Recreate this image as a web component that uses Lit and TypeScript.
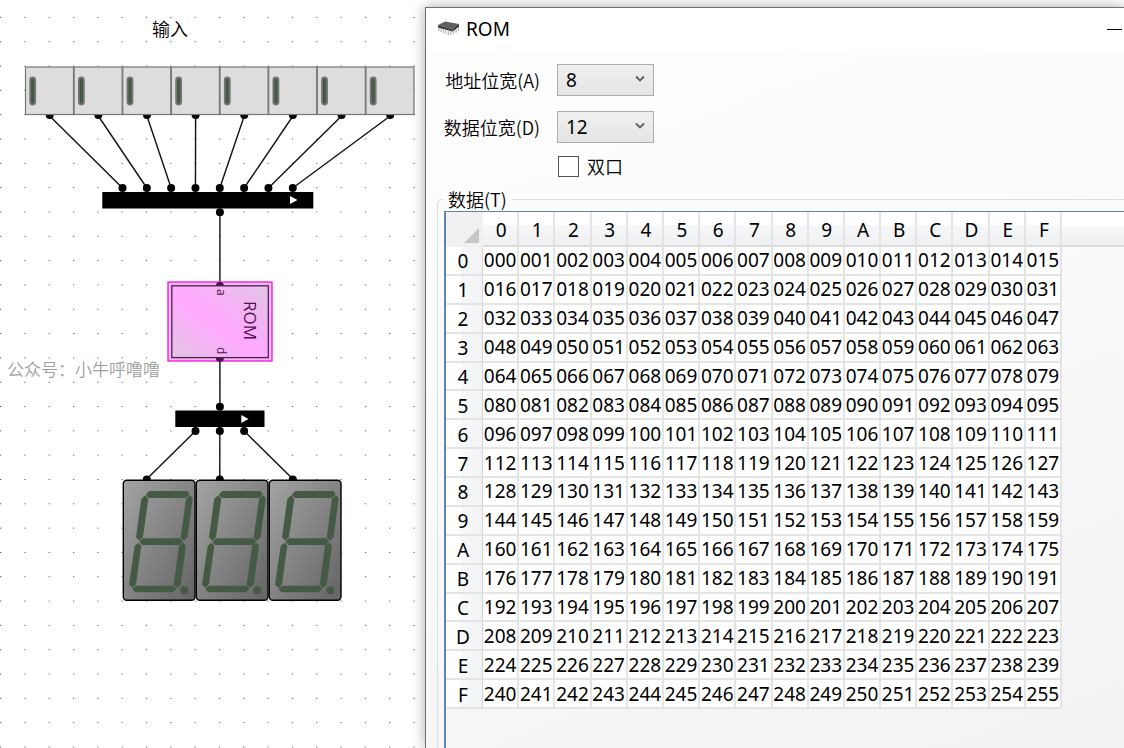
import { LitElement, html, svg, css } from "lit";
import { customElement, property } from "lit/decorators.js";

const HEX = "0123456789ABCDEF".split("");
const PITCH = 48.64;
const HALF = 24.32;

@customElement("circuit-canvas")
class CircuitCanvas extends LitElement {
  static styles = css`
    :host { display: block; height: 100%; overflow: hidden; background: #fff; }
    .sheet { display: block; }
    .caption { font: 350 18px "Noto Sans CJK SC", sans-serif; fill: #000; }
    .note { font: 350 17px "Noto Sans CJK SC", sans-serif; fill: #a0a0a0; }
    .part { font: 17px "Open Sans", "Noto Sans", sans-serif; fill: #50104f; }
    .pin { font: 12px "Open Sans", "Noto Sans", sans-serif; fill: #50104f; }
    .wire { stroke: #111; stroke-width: 1.4; fill: none; }
    .box { fill: #ddd; stroke: #777; stroke-width: 1.2; }
    .lamp { fill: #445a44; stroke: #747474; stroke-width: 1.8; }
    .led { fill: #445a44; }
  `;

  private input(i: number) {
    const x = 25.5 + i * PITCH;
    return svg`
      <circle cx=${x + 24.2} cy="115" r="4"></circle>
      <rect class="box" x=${x} y="67" width="48" height="47.5"></rect>
      <rect class="lamp" x=${x + 4.7} y="77.5" width="5" height="27" rx="2.5"></rect>
      <line class="wire" x1=${x + 24.2} y1="116" x2=${122.5 + i * HALF} y2="188"></line>
      <circle cx=${122.5 + i * HALF} cy="188" r="4"></circle>`;
  }

  private display(i: number) {
    const x = 123 + i * 73;
    return svg`
      <line class="wire" x1=${195.5 + i * HALF} y1="431" x2=${146.8 + i * 73} y2="479"></line>
      <circle cx=${195.5 + i * HALF} cy="431" r="4"></circle>
      <circle cx=${146.8 + i * 73} cy="479.5" r="4"></circle>
      <g transform="translate(${x} 480)">
        <rect x="0.3" y="0.3" width="71.7" height="120" rx="3.5" fill="url(#panel)" stroke="#000" stroke-width="1.4"></rect>
        <g class="led">
          <path d="M22.7 14.7L26.3 11H64.7L66.7 14.5L63 18H25.7Z"></path>
          <path d="M22.3 15.3L25.3 18.7L20 57L16.3 60.7L13 57.3L18.3 18.7Z"></path>
          <path d="M67.3 15.3L69.7 18.3L64.7 57L61 60.7L57.7 57.7L63 18.7Z"></path>
          <path d="M16.3 61.7L20 58.3H57.3L60.3 61.7L56.7 65H19Z"></path>
          <path d="M15.3 62.7L18.3 65.7L13 104.3L9.7 108L6 104.7L11.7 65.7Z"></path>
          <path d="M60.3 62.7L63 65.7L57.7 104.3L54 108L50.7 105L56 65.7Z"></path>
          <path d="M9.3 109L13 105.7H50.7L53.3 109L49.7 112.3H12.3Z"></path>
          <circle cx="61.3" cy="110.3" r="4"></circle>
        </g>
      </g>`;
  }

  render() {
    return html`
      <svg class="sheet" width="100%" height="100%">
        <defs>
          <pattern id="dots" x="0" y="16.9" width="24.32" height="24.32" patternUnits="userSpaceOnUse">
            <rect width="1.2" height="1" fill="#555"></rect>
          </pattern>
          <linearGradient id="panel" x1="0" y1="0" x2="1" y2="1">
            <stop offset="0" stop-color="#a4a4a4"></stop>
            <stop offset="1" stop-color="#646464"></stop>
          </linearGradient>
          <linearGradient id="sheen" x1="0" y1="1" x2="1" y2="0">
            <stop offset="0" stop-color="#e2c4e2"></stop>
            <stop offset="0.45" stop-color="#ffaaff"></stop>
            <stop offset="0.55" stop-color="#fcacfc"></stop>
            <stop offset="1" stop-color="#e2c4e2"></stop>
          </linearGradient>
        </defs>
        <rect width="100%" height="100%" fill="url(#dots)"></rect>
        <text class="caption" x="152" y="36">输入</text>
        ${HEX.slice(0, 8).map((_, i) => this.input(i))}
        <rect x="102.3" y="192" width="211" height="16.5"></rect>
        <path d="M290 196L297.5 200L290 204Z" fill="#fff"></path>
        <line class="wire" x1="219.9" y1="212" x2="219.9" y2="285"></line>
        <line class="wire" x1="219.9" y1="358" x2="219.9" y2="407"></line>
        <circle cx="219.9" cy="212.3" r="4"></circle>
        <rect x="168" y="282" width="104" height="79" fill="#f2b8f0" stroke="#f122e6" stroke-width="1.4"></rect>
        <circle cx="219.9" cy="286" r="4" fill="#50104f"></circle>
        <circle cx="219.9" cy="358" r="4" fill="#50104f"></circle>
        <rect x="171.8" y="285.8" width="96.5" height="71.8" fill="url(#sheen)" stroke="#4f204f" stroke-width="1.3"></rect>
        <text class="part" transform="translate(244 301) rotate(90)">ROM</text>
        <text class="pin" transform="translate(217 289) rotate(90)">a</text>
        <text class="pin" transform="translate(217 347) rotate(90)">d</text>
        <text class="note" x="7" y="376">公众号：小牛呼噜噜</text>
        <rect x="175.3" y="410.5" width="89.2" height="16.5"></rect>
        <path d="M241.3 415L248.5 419L241.3 423Z" fill="#fff"></path>
        <circle cx="219.9" cy="406.8" r="4"></circle>
        ${[0, 1, 2].map((i) => this.display(i))}
      </svg>`;
  }
}

@customElement("memory-table")
class MemoryTable extends LitElement {
  @property({ type: Number }) digits = 3;

  static styles = css`
    :host {
      display: block; flex: 1; border: 1px solid #5c86ae; border-width: 1px 0 0 2px;
      background: linear-gradient(to bottom, #fff 14px, #f6f7f8 15px, #eef0f2 33px, #dcdcdc 33px, #dcdcdc 35px, transparent 35px) top / 100% 35px no-repeat;
    }
    .grid {
      display: grid; width: 616px; height: 497px;
      grid-template-columns: 37px repeat(16, 1fr);
      grid-template-rows: 35px repeat(16, 1fr);
      font-size: 19px; line-height: 26px; color: #000;
    }
    .group, .row { display: contents; }
    .head, .side, .corner, .cell {
      display: flex; align-items: center; justify-content: center; padding: 0;
      box-sizing: border-box; font-weight: 400; border: 0 solid #e4e4e4; border-width: 0 2px 2px 0;
      min-width: 0; min-height: 0;
    }
    .head { background: linear-gradient(#fff 40%, #f6f7f8 41%, #eef0f2); border-bottom-color: #dcdcdc; padding: 2px 0 0 2px; }
    .side { background: linear-gradient(to right, #fff 40%, #f6f8fa 41%, #f1f3f5); border-right: 1px solid #d5d5d5; padding: 2px 2px 0 0; }
    .corner { background: #f0f0f0; border: 0; align-items: flex-end; justify-content: flex-end; padding: 0 4px 4px 0; }
    .cell { background: #fff; }
  `;

  render() {
    return html`
      <table class="grid">
        <thead class="group">
          <tr class="row">
            <td class="corner">
              <svg width="15" height="15" aria-hidden="true"><path d="M15 0V15H0Z" fill="#c8c8c8"></path></svg>
            </td>
            ${HEX.map((h) => html`<th class="head" scope="col">${h}</th>`)}
          </tr>
        </thead>
        <tbody class="group">
          ${HEX.map((h, r) => html`
            <tr class="row">
              <th class="side" scope="row">${h}</th>
              ${HEX.map((_, c) => html`<td class="cell">${String(r * 16 + c).padStart(this.digits, "0")}</td>`)}
            </tr>`)}
        </tbody>
      </table>`;
  }
}

@customElement("rom-dialog")
class RomDialog extends LitElement {
  static styles = css`
    :host {
      display: flex; flex-direction: column; box-sizing: border-box; overflow: hidden;
      border: 1px solid #707070; border-width: 1px 0 0 1px; color: #000; background: #fff;
    }
    .title { display: flex; align-items: center; height: 43px; padding: 0 2px 1px 11px; gap: 6px; background: #fff; box-sizing: border-box; }
    .name { flex: 1; margin: 0; font-size: 19px; line-height: 26px; font-weight: 400; }
    .min { border: 0; padding: 0; width: 15px; height: 24px; background: none; display: flex; align-items: center; }
    .min svg { display: block; }
    .body {
      flex: 1; display: flex; flex-direction: column; padding: 13px 0 0 11px;
      background: linear-gradient(160deg, #fefefe, #fbfbfb 40%, #f2f2f2); box-sizing: border-box; min-height: 0;
    }
    .fields { display: grid; grid-template-columns: 103px 97px; row-gap: 15px; column-gap: 17px; align-items: center; font-size: 18px; }
    .label { justify-self: end; line-height: 26px; white-space: nowrap; }
    .label, .check, .legend { font-family: "Noto Sans CJK SC", sans-serif; font-weight: 350; }
    .pick { position: relative; display: block; }
    .select {
      appearance: none; display: block; width: 100%; height: 32px; box-sizing: border-box; margin: 0;
      border: 1px solid #acacac; border-radius: 0; padding: 0 8px; color: #000;
      background: linear-gradient(#f0f0f0, #e4e4e4); font: inherit; font-size: 19px;
    }
    .arrow { position: absolute; right: 9px; top: 11px; pointer-events: none; }
    .check { display: flex; align-items: center; gap: 8px; margin: 10px 0 0 121px; font-size: 18px; line-height: 26px; }
    .tick { appearance: none; width: 21px; height: 21px; margin: 0; border: 1px solid #555; background: #fff; box-sizing: border-box; }
    .data {
      flex: 1; display: flex; flex-direction: column; min-height: 0; min-width: 0;
      margin: 8px 0 0; padding: 0 0 0 6px; border: 1px solid #d5dfe5; border-width: 1px 0 0 1px; border-radius: 5px 0 0 0;
    }
    .legend { margin-left: -1px; padding: 0 5px; font-size: 18px; line-height: 24px; height: 24px; }
  `;

  private select(id: string, label: string, value: string) {
    return html`
      <label class="label" for=${id}>${label}</label>
      <span class="pick">
        <select class="select" id=${id}><option>${value}</option></select>
        <svg class="arrow" width="10" height="8" viewBox="0 0 10 8" aria-hidden="true">
          <path d="M1 1.5L5 5.5L9 1.5" fill="none" stroke="#606060" stroke-width="1.9"></path>
        </svg>
      </span>`;
  }

  render() {
    return html`
      <header class="title">
        <svg width="23" height="16" viewBox="0 0 23 16" aria-hidden="true">
          <path d="M2 6V10M4 7V11M6.500 8V12M9 9V13M11.500 10V14M14 10V14M16.500 9V13M19 8V12M21.500 6V10" stroke="#b4b4b4" stroke-width="1.2"></path>
          <path d="M1 4L8 0.500L22 3L15.500 8.500Z" fill="#606060"></path>
          <path d="M1 4L15.500 8.500V10.500L1 6.500Z" fill="#3a3a3a"></path>
          <path d="M15.500 8.500L22 3V5.500L15.500 10.500Z" fill="#2a2a2a"></path>
        </svg>
        <h1 class="name">ROM</h1>
        <button class="min" aria-label="最小化"><svg width="15" height="1"><rect width="15" height="1"></rect></svg></button>
      </header>
      <div class="body">
        <div class="fields">
          ${this.select("address", "地址位宽(A)", "8")}
          ${this.select("width", "数据位宽(D)", "12")}
        </div>
        <label class="check"><input class="tick" type="checkbox" />双口</label>
        <fieldset class="data">
          <legend class="legend">数据(T)</legend>
          <memory-table></memory-table>
        </fieldset>
      </div>`;
  }
}

@customElement("app-root")
class AppRoot extends LitElement {
  static styles = css`
    :host {
      display: grid; grid-template-columns: 425px minmax(0, 1fr); height: 100vh; overflow: hidden;
      background: #fff; font-family: "Noto Sans", "Noto Sans CJK SC", sans-serif;
    }
    .window { margin-top: 7px; box-shadow: 0 0 12px rgba(0, 0, 0, 0.35); z-index: 1; }
  `;

  render() {
    return html`
      <circuit-canvas></circuit-canvas>
      <rom-dialog class="window"></rom-dialog>`;
  }
}
